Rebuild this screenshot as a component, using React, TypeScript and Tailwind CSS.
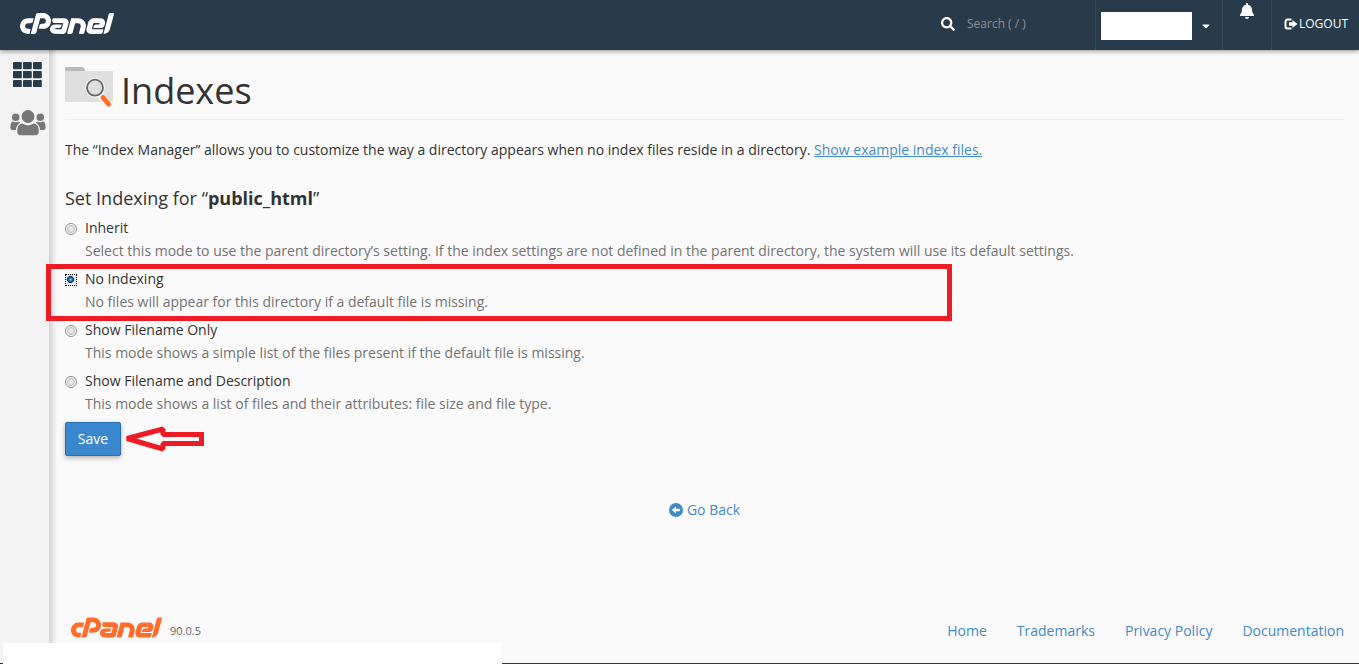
import { FaBell, FaCaretDown, FaSearch } from "react-icons/fa";
import { SiCpanel } from "react-icons/si";

const modes = [
  {
    id: "inherit",
    label: "Inherit",
    text: "Select this mode to use the parent directory’s setting. If the index settings are not defined in the parent directory, the system will use its default settings.",
  },
  {
    id: "none",
    label: "No Indexing",
    text: "No files will appear for this directory if a default file is missing.",
    highlighted: true,
  },
  {
    id: "standard",
    label: "Show Filename Only",
    text: "This mode shows a simple list of the files present if the default file is missing.",
  },
  {
    id: "fancy",
    label: "Show Filename and Description",
    text: "This mode shows a list of files and their attributes: file size and file type.",
  },
];

const footerLinks = ["Home", "Trademarks", "Privacy Policy", "Documentation"];

function LogoutIcon() {
  return (
    <svg viewBox="0 0 14 12" className="h-3 w-3.5" aria-hidden="true">
      <path d="M7.500 1.500H3.500A2 2 0 0 0 1.500 3.500v5A2 2 0 0 0 3.500 10.500H7.500" fill="none" stroke="currentColor" strokeWidth="2" />
      <path d="M5 4.200h3.500V2L13.500 6l-5 4V7.800H5z" fill="currentColor" />
    </svg>
  );
}

function GridIcon() {
  const columns = [0, 10, 20];
  const rows = [0, 9, 18];
  return (
    <svg viewBox="0 0 29 25" className="h-[25px] w-[29px]" fill="currentColor" aria-hidden="true">
      {columns.map((x) =>
        rows.map((y) => <rect key={`${x}-${y}`} x={x} y={y} width="8.800" height="7.200" rx="1" />),
      )}
    </svg>
  );
}

function UsersIcon() {
  return (
    <svg viewBox="0 0 36 26" className="h-[26px] w-9" fill="currentColor" aria-hidden="true">
      <circle cx="18" cy="6.500" r="6.400" />
      <circle cx="5.700" cy="7.300" r="3.800" />
      <circle cx="30.300" cy="7.300" r="3.800" />
      <path d="M12.200 13.600q5.800 3.600 11.600 0q5 .8 5 7.600q0 4-3.600 4H10.800q-3.600 0-3.600-4q0-6.800 5-7.600z" />
      <path d="M2.500 11.500q3.200 1.600 6.400 0l1.200 1.200q-3.900 2.200-4.100 7.300H2q-1.600 0-1.600-2.200q0-5.300 2.100-6.300z" />
      <path d="M33.500 11.500q-3.200 1.600-6.400 0l-1.200 1.200q3.900 2.200 4.100 7.300h4q1.600 0 1.600-2.200q0-5.300-2.100-6.300z" />
    </svg>
  );
}

function BackIcon() {
  return (
    <svg viewBox="0 0 14 14" className="size-3.5" aria-hidden="true">
      <circle cx="7" cy="7" r="7" fill="currentColor" />
      <path d="M2.800 7L7 3.500v2.300h3.800v2.400H7v2.300z" fill="#fafafa" />
    </svg>
  );
}

function FolderSearchIcon() {
  return (
    <svg viewBox="0 0 48 41" className="h-[41px] w-12 shrink-0" aria-hidden="true">
      <path d="M0 5V1Q0 0 1 0H17q1.500 0 2.200 1.500L21 5z" fill="#b9b9b9" />
      <path d="M0 4h47q1 0 1 1v29q0 1-1 1h-46Q0 35 0 34z" fill="#dfdfdf" />
      <circle cx="30" cy="20.700" r="9.700" fill="#fafafa" />
      <path d="M35 27.500l9 11" stroke="#fafafa" strokeWidth="7" />
      <circle cx="30" cy="20.700" r="8" fill="#dfdfdf" stroke="#666" strokeWidth="1.800" />
      <path d="M38 30.500l5.500 6.500" stroke="#ff6c2c" strokeWidth="5" strokeLinecap="round" />
    </svg>
  );
}

function PointerArrow() {
  return (
    <svg viewBox="0 0 82 26" className="absolute left-[59px] top-1 h-[26px] w-[82px]" aria-hidden="true">
      <path
        d="M3 12.500L39 3v5.500h38v9H39V23z"
        fill="#fafafa"
        stroke="#ed1c24"
        strokeWidth="5"
        strokeLinejoin="bevel"
      />
      <path d="M70 6h10v14H70z" fill="#ed1c24" />
      <path d="M69 11h6v4h-6z" fill="#fafafa" />
    </svg>
  );
}

function Header() {
  return (
    <header className="relative z-10 flex h-[50px] items-stretch bg-[#293a4a] text-white shadow-[0_1px_5px_rgba(0,0,0,0.45)]">
      <a href="#home" aria-label="cPanel" className="flex items-start pl-5 pt-[13px]">
        <SiCpanel viewBox="0 9.400 24 5.200" className="h-[21px] w-[94px]" />
      </a>
      <div className="ml-auto flex w-[154px] items-center gap-3 pb-0.5">
        <FaSearch className="size-3.5 shrink-0" />
        <input
          type="text"
          aria-label="Search"
          placeholder="Search ( / )"
          className="w-28 bg-transparent text-xs outline-none placeholder:text-[#8b9197]"
        />
      </div>
      <button type="button" aria-label="Account" className="flex w-[127px] items-center gap-2 border-l border-[#34495e] pl-[5px] pt-0.5">
        <span className="h-7 w-[91px] bg-white" />
        <FaCaretDown className="size-3" />
      </button>
      <button type="button" aria-label="Notifications" className="flex w-[49px] justify-center border-l border-[#34495e] pt-[3px]">
        <FaBell className="size-4" />
      </button>
      <a href="#logout" className="flex w-[88px] items-center border-l border-[#34495e] pb-0.5 pl-3 text-xs">
        <LogoutIcon />
        <span className="ml-px">LOGOUT</span>
      </a>
    </header>
  );
}

function Sidebar() {
  return (
    <nav className="flex w-[49px] shrink-0 flex-col items-center gap-[23px] bg-[#f3f3f3] pl-1.5 pt-3" aria-label="Main">
      <a href="#tools" aria-label="Tools" className="text-[#293a4a]">
        <GridIcon />
      </a>
      <a href="#users" aria-label="User Manager" className="text-[#777]">
        <UsersIcon />
      </a>
    </nav>
  );
}

export default function App() {
  return (
    <div className="relative flex min-h-screen flex-col bg-[#fafafa] font-['Open_Sans',sans-serif] text-sm leading-5 text-[#333] [&_svg]:block">
      <Header />
      <div className="flex flex-1">
        <Sidebar />
        <div className="w-2 shrink-0 bg-linear-to-r from-[#d2d2d2] to-[#fafafa]" />
        <div className="flex min-w-0 flex-1 flex-col pl-2 pr-[15px]">
          <main className="flex-1">
            <h1 className="flex h-[70px] items-start gap-2 border-b border-[#eee] pt-[17px] text-4xl">
              <FolderSearchIcon />
              <span className="pt-1">Indexes</span>
            </h1>
            <p className="mt-5">
              The “Index Manager” allows you to customize the way a directory appears when no index files reside in a directory.{" "}
              <a href="#examples" className="text-[#428bca] underline">
                Show example index files.
              </a>
            </p>
            <form onSubmit={(event) => event.preventDefault()}>
              <fieldset>
                <legend className="pb-2 pt-7 text-lg leading-5">
                  Set Indexing for “<b>public_html</b>”
                </legend>
                {modes.map((mode) => (
                  <div key={mode.id} className="relative flex h-[51px] gap-2">
                    {mode.highlighted && (
                      <div className="pointer-events-none absolute -left-[19px] -top-[3px] h-[57px] w-[906px] border-5 border-[#ed1c24]" />
                    )}
                    <input
                      type="radio"
                      name="indexing"
                      id={mode.id}
                      defaultChecked={mode.id === "none"}
                      aria-describedby={`${mode.id}-text`}
                      className="mt-[7px] size-3 shrink-0 appearance-none rounded-full border border-[#8e8f8f] bg-[radial-gradient(circle,#e9e9e9_25%,#c4c6c8_50%,#fff_65%)] checked:rounded-none checked:border-dotted checked:border-black checked:bg-[radial-gradient(circle_at_45%_45%,#8fdcf5_0%,#1b7fae_20%,#0b3450_42%,#c9d5dc_48%,#eee_60%)]"
                    />
                    <div className="leading-[23px]">
                      <label htmlFor={mode.id} className="block">
                        {mode.label}
                      </label>
                      <p id={`${mode.id}-text`} className="text-[#737373]">
                        {mode.text}
                      </p>
                    </div>
                  </div>
                ))}
              </fieldset>
              <div className="relative mt-0.5">
                <button
                  type="submit"
                  className="h-[34px] w-14 rounded-xs border border-[#2a6fb0] bg-[#3a87cd] text-white shadow-[0_2px_5px_rgba(0,0,0,0.3)]"
                >
                  Save
                </button>
                <PointerArrow />
              </div>
            </form>
            <div className="mt-11 text-center">
              <a href="#back" className="inline-flex items-center gap-1 text-[#428bca]">
                <BackIcon />
                Go Back
              </a>
            </div>
          </main>
          <footer className="flex items-end justify-between pb-[23px]">
            <div className="flex items-end gap-2 pb-0.5 pl-1.5">
              <SiCpanel viewBox="0 9.400 24 5.200" className="mb-px h-[21px] w-[91px] text-[#ff6c2c]" aria-label="cPanel" />
              <span className="text-[11px] leading-4 text-[#666]">90.0.5</span>
            </div>
            <nav className="flex gap-[30px] text-[#428bca]" aria-label="Footer">
              {footerLinks.map((name) => (
                <a key={name} href="#footer">
                  {name}
                </a>
              ))}
            </nav>
          </footer>
        </div>
      </div>
      <div className="absolute inset-x-0 bottom-0 h-px bg-[#333]" />
      <div className="absolute bottom-0 left-[3px] h-[21px] w-[499px] bg-white" />
    </div>
  );
}
